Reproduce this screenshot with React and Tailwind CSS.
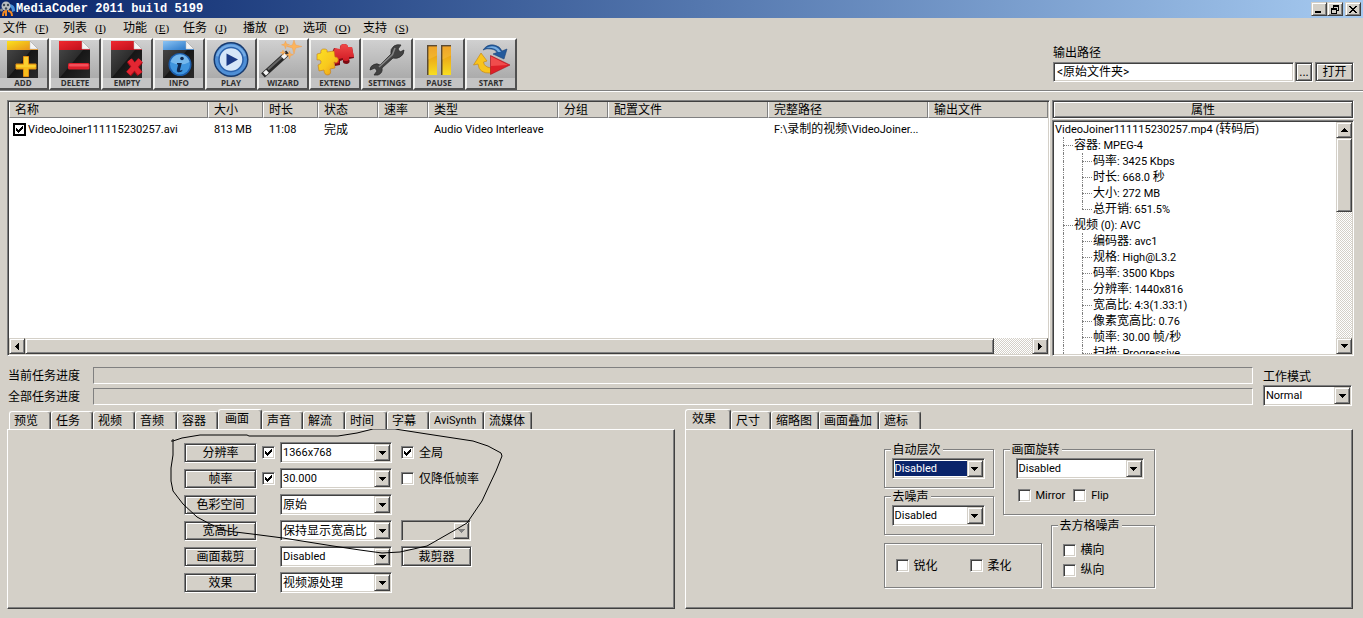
import React from "react";

const sunken =
  "border border-t-[#808080] border-l-[#808080] border-b-white border-r-white p-px shadow-[inset_1px_1px_0_#404040,inset_-1px_-1px_0_#d4d0c8]";
const raised =
  "border border-t-[#d4d0c8] border-l-[#d4d0c8] border-b-[#404040] border-r-[#404040] bg-[#d4d0c8] shadow-[inset_1px_1px_0_#fff,inset_-1px_-1px_0_#808080]";
const framed =
  "border border-t-[#808080] border-l-[#808080] border-b-white border-r-white bg-[#d4d0c8] shadow-[inset_0_0_0_1px_#404040,inset_2px_2px_0_#fff,inset_-2px_-2px_0_#808080]";
const dither =
  "bg-[repeating-conic-gradient(#fff_0_25%,#d4d0c8_0_50%)] bg-[length:2px_2px]";

/* Latin runs are one pixel smaller than the Chinese text beside them. */
function Mix({ text }) {
  return text.split(/([\x20-\x7e]+)/).map((part, i) =>
    /^[\x20-\x7e]+$/.test(part) ? (
      <span key={i} className="text-[11px] whitespace-pre">{part}</span>
    ) : (
      part
    )
  );
}

function Arrow({ dir = "down", color = "#000" }) {
  const d = {
    down: "M0 0h7v1h-1v1h-1v1h-1v1h-1v-1h-1v-1h-1v-1h-1z",
    up: "M3 0h1v1h1v1h1v1h1v1h-7v-1h1v-1h1v-1h1z",
    left: "M3 0h1v7h-1v-1h-1v-1h-1v-1h-1v-1h1v-1h1v-1h1z",
    right: "M0 0h1v1h1v1h1v1h1v1h-1v1h-1v1h-1v1h-1z",
  }[dir];
  const side = dir === "left" || dir === "right";
  return (
    <svg width={side ? 4 : 7} height={side ? 7 : 4} shapeRendering="crispEdges" aria-hidden="true">
      <path d={d} fill={color} />
    </svg>
  );
}

function Select({ label, value, className = "", focused, disabled }) {
  return (
    <div className={`${sunken} relative h-[21px] ${disabled ? "" : "bg-white"} ${className}`}>
      <select
        aria-label={label}
        disabled={disabled}
        defaultValue={value}
        className={`block h-full w-full appearance-none pr-4 leading-[16px] outline-none ${
          /[a-z0-9]/i.test(value) ? "text-[11px]" : "text-[12px]"
        } ${
          focused
            ? "border border-white bg-[#0a246a] text-white outline-1 -outline-offset-2 outline-dotted outline-[#f5db95]"
            : "pl-px text-black"
        }`}
      >
        <option>{value}</option>
      </select>
      <span className={`${raised} pointer-events-none absolute top-px right-px bottom-px flex w-4 items-center justify-center`}>
        <Arrow color={disabled ? "#808080" : "#000"} />
      </span>
    </div>
  );
}

function Check({ label, text, checked, flat }) {
  return (
    <label className={`flex h-4 items-center ${flat ? "gap-[2px]" : "gap-[5px]"}`}>
      <span className="relative block size-[13px] shrink-0">
        <input
          type="checkbox"
          aria-label={label}
          defaultChecked={checked}
          className={`peer block size-[13px] appearance-none bg-white ${
            flat ? "border-2 border-black" : sunken
          }`}
        />
        <svg className="pointer-events-none absolute top-[3px] left-[3px] hidden peer-checked:block" width="7" height="7" shapeRendering="crispEdges" aria-hidden="true">
          <path d="M0 2h1v1h1v1h1v-1h1v-1h1v-1h1v-1h1v3h-1v1h-1v1h-1v1h-1v1h-1v-1h-1v-1h-1z" />
        </svg>
      </span>
      {text && <span className="whitespace-nowrap"><Mix text={text} /></span>}
    </label>
  );
}

function Btn({ children, className = "" }) {
  return (
    <button type="button" className={`${framed} flex items-center justify-center whitespace-nowrap ${className}`}>
      {children}
    </button>
  );
}

function Group({ title, className = "", children }) {
  return (
    <fieldset className={`border border-[#808080] shadow-[1px_1px_0_#fff,inset_1px_1px_0_#fff] ${className}`}>
      {title && <legend className="float-left -mt-2 ml-[6px] bg-[#d4d0c8] px-[2px] leading-[16px]">{title}</legend>}
      {children}
    </fieldset>
  );
}

/* ---------- toolbar drawings ---------- */

function Sheet({ from, to, id, children }) {
  return (
    <>
      <defs>
        <linearGradient id={id} x1="0" y1="0" x2="1" y2="1">
          <stop offset="0" stopColor={from} />
          <stop offset="1" stopColor={to} />
        </linearGradient>
        <linearGradient id={id + "b"} x1="0" y1="0" x2="1" y2="1">
          <stop offset="0" stopColor="#4c4c4c" />
          <stop offset=".5" stopColor="#2c2c2c" />
          <stop offset=".52" stopColor="#161616" />
          <stop offset="1" stopColor="#2a2a2a" />
        </linearGradient>
      </defs>
      <path d="M8 1H31L39 9V38H8Z" fill={`url(#${id}b)`} />
      <path d="M8 1H31V10H8Z" fill={`url(#${id})`} />
      <path d="M31 9H39V10H31Z" fill={to} />
      <path d="M31 1L39 9H31Z" fill="#f4f4f4" stroke="#bbb" strokeWidth=".5" />
      {children}
    </>
  );
}

const pictures = {
  ADD: (
    <Sheet id="ga" from="#fbe21d" to="#e8931a">
      <path d="M24.500 16.500h5v7.500h7.500v5h-7.500v7.500h-5v-7.500h-7.500v-5h7.500z" fill="#f5bd1c" stroke="#e28c12" strokeLinejoin="round" />
      <path d="M25 17h4v8h8v2H17v-2h8z" fill="#fbdc3c" opacity=".6" />
    </Sheet>
  ),
  DELETE: (
    <Sheet id="gd" from="#f02a30" to="#c0101c">
      <rect x="17" y="23" width="21.500" height="6.500" rx="1.500" fill="#dc1f2b" />
      <rect x="18" y="24" width="19.500" height="2.500" rx="1" fill="#f0505a" />
    </Sheet>
  ),
  EMPTY: (
    <Sheet id="ge" from="#f02a30" to="#c0101c">
      <path d="M26.500 20.500L37 34M37.500 20.500L25.500 34" stroke="#a80c18" strokeWidth="6.500" />
      <path d="M26.500 20L37 33.500M37.500 20L25.500 33.500" stroke="#e32632" strokeWidth="5" />
    </Sheet>
  ),
  INFO: (
    <Sheet id="gi" from="#8cc4f4" to="#2a78c8">
      <circle cx="25" cy="24.500" r="11.500" fill="#1c5fae" />
      <circle cx="25" cy="24.500" r="10" fill="#3f95de" />
      <path d="M15.500 22a9.700 9.700 0 0 1 19 0q-9 5-19 0z" fill="#8cc6f2" opacity=".7" />
      <circle cx="27" cy="18.500" r="1.800" fill="#10294f" />
      <path d="M22 23h4.800l-2 7.500q1.300.4 2.700-.7l-.4 1.400q-2 1.500-4.200 1-1.600-.4-1-2.700l1.300-5H22z" fill="#10294f" />
    </Sheet>
  ),
  PLAY: (
    <>
      <circle cx="24" cy="19.500" r="17.500" fill="#173a6e" />
      <circle cx="24" cy="19.500" r="16" fill="#4f8fd6" />
      <path d="M9 16a15.500 15.500 0 0 1 30 0q-14 5-30 0z" fill="#8fc0ee" opacity=".6" />
      <circle cx="24" cy="19.500" r="12" fill="#d5e6f8" stroke="#2b62ac" strokeWidth="1.500" />
      <path d="M19.500 13.500L31 19.500L19.500 26Z" fill="#1a3a86" />
    </>
  ),
  WIZARD: (
    <>
      <path d="M6 33.500L27 14.500" stroke="#2a2a2a" strokeWidth="5.500" strokeLinecap="square" />
      <path d="M9 29.500L24 16" stroke="#666" strokeWidth="2" />
      <path d="M5.500 34L8.500 31.300M23.500 17.700L27 14.500" stroke="#f6f6f6" strokeWidth="4.200" />
      <path d="M35 0l1.600 5 6.400 1.500-6.400 1.500L35 14l-1.600-6L28 6.500 33.400 5zM26.500 1l1 2.800 3 1-3 1-1 3-1-3-3-1 3-1zM30.500 11l.9 2.700 3.100 1-3.100 1-.9 3.300-.9-3.300-3.100-1 3.100-1zM24 10l.7 2 2 .6-2 .6-.7 2-.7-2-2-.6 2-.6z" fill="#fbb45c" stroke="#f2994a" strokeWidth=".4" />
    </>
  ),
  EXTEND: (
    <>
      <defs>
        <linearGradient id="gy" x1="0" y1="0" x2="1" y2="1">
          <stop offset="0" stopColor="#fce223" />
          <stop offset=".55" stopColor="#f8c81e" />
          <stop offset="1" stopColor="#e8901a" />
        </linearGradient>
        <linearGradient id="gr" x1="0" y1="0" x2="0" y2="1">
          <stop offset="0" stopColor="#f04a48" />
          <stop offset="1" stopColor="#cc121e" />
        </linearGradient>
      </defs>
      <path d="M20 15l3-7 6 2q-1-6 4-6 4 0 4 4l4-1 2 11-5 1q2 4-2 5-5 0-4-4l-3 1 0 4-5 1-1-5q-3-1-3-6z" fill="#7c0a12" />
      <path d="M21 14l3-6 5 1q0-5 4-5 4 0 4 3l4 0 2 10-5 0q1 4-3 4-4 0-3-3l-4 1 0 4-4 1-1-5q-2-1-2-5z" fill="url(#gr)" />
      <path d="M6 14l4-1q-1-4 3-4 4 0 3 3l7-1 1 6q4 0 3 4-1 3-4 1l1 6-5 1q2 5-2 6-4 0-4-5l-5 1-1-6q4-1 3-4-2-2-4-1z" fill="url(#gy)" stroke="#c87a12" strokeWidth=".6" />
    </>
  ),
  SETTINGS: (
    <>
      <path
        d="M31 6Q34 4 38 5L35 9L37 12L41 10Q41 15 37 17Q34 19 30 18L19 28Q20 33 15 35L11 35L14 31L12 28L7 30Q7 26 11 24.500Q14 23 17 25L28 14Q27 9 31 6Z"
        fill="#424242"
        stroke="#2c2c2c"
        strokeWidth=".8"
        strokeLinejoin="round"
      />
      <path d="M16 27L29.500 14.500L32 8" fill="none" stroke="#858585" strokeWidth="1.500" />
    </>
  ),
  PAUSE: (
    <>
      <defs>
        <linearGradient id="gp" x1="0" y1="0" x2="0" y2="1">
          <stop offset="0" stopColor="#e58a14" />
          <stop offset="1" stopColor="#f8de20" />
        </linearGradient>
      </defs>
      <path d="M12 5h10v30H12zM26 5h10v30H26z" fill="#5a4a34" />
      <path d="M13.500 6.500h8.500v28.500h-8.500zM27.500 6.500h8.500v28.500h-8.500z" fill="url(#gp)" />
      <path d="M13.500 6.500h8.500v9l-8.500 4zM27.500 6.500h8.500v9l-8.500 4z" fill="#f8c040" opacity=".5" />
    </>
  ),
  START: (
    <>
      <path d="M16 10Q20 4 27 5Q33 6 35 11L40 9L37 19L26 14L30 12.500Q28 9 24 9Q20 8 16 10Z" fill="#235a9c" stroke="#1b4379" strokeWidth=".6" />
      <path d="M19 8Q24 5 29 7Q33 9 34 12L31 12Q28 7 19 8Z" fill="#78aee2" />
      <path d="M14 13L20 21L16.500 22Q17 27 24 28L24 33Q12 34 11 24L6.500 25Z" fill="#f9c41c" stroke="#c98a14" strokeWidth=".7" />
      <path d="M23.500 15.500L43 25L23.500 34.500Z" fill="#dd2028" stroke="#a8101a" strokeWidth=".6" />
      <path d="M24 16.500L41 25L24 26Z" fill="#f04c4c" />
    </>
  ),
};

function ToolButton({ name }) {
  return (
    <button type="button" className="flex w-[52px] shrink-0 flex-col border-2 border-t-white border-l-[#f4f4f2] border-r-[#505050] border-b-[#505050] bg-linear-to-b from-[#d0d0d0] to-[#a2a2a2]">
      <svg width="48" height="38" viewBox="0 0 48 38" aria-hidden="true">{pictures[name]}</svg>
      <span className="block h-[10px] w-full overflow-hidden bg-[#c4c4c4] text-center font-['Open_Sans'] text-[8px] leading-[10px] font-bold text-[#303030]">
        {name}
      </span>
    </button>
  );
}

/* ---------- window parts ---------- */

function TitleBar() {
  return (
    <header className="flex h-[18px] items-center bg-linear-to-r from-[#0a246a] to-[#a6caf0] pr-[2px]">
      <svg width="16" height="16" viewBox="0 0 16 16" aria-hidden="true">
        <path d="M8 3c5 0 7 2 7 7l-3 1c0-4-1-5-4-5z" fill="#4a90d8" />
        <circle cx="6" cy="5" r="4.500" fill="#b9bcc0" />
        <circle cx="4" cy="4" r="1.200" fill="#3b4452" />
        <circle cx="8" cy="4" r="1.200" fill="#3b4452" />
        <circle cx="6" cy="7.500" r="1.200" fill="#3b4452" />
        <circle cx="1.500" cy="9" r="1.500" fill="#8b8f96" />
        <path d="M3 15c0-3 1-5 3-5v5M8 10c3 0 4 2 4 5" fill="none" stroke="#f08a24" strokeWidth="2" />
      </svg>
      <h1 className="flex-1 font-['Liberation_Mono',monospace] text-[12px] leading-[18px] font-bold text-white">
        MediaCoder 2011 build 5199
      </h1>
      <button type="button" aria-label="Minimize" className={`${raised} flex h-[14px] w-4 items-center justify-center`}>
        <svg width="8" height="8" shapeRendering="crispEdges"><path d="M0 6h6v2H0z" /></svg>
      </button>
      <button type="button" aria-label="Restore" className={`${raised} flex h-[14px] w-4 items-center justify-center`}>
        <svg width="8" height="9" shapeRendering="crispEdges">
          <path d="M2 0h6v6H6V5h1V2H3v1H2zM0 3h6v6H0zM1 5v3h4V5z" fillRule="evenodd" />
        </svg>
      </button>
      <button type="button" aria-label="Close" className={`${raised} ml-[2px] flex h-[14px] w-4 items-center justify-center`}>
        <svg width="8" height="7" shapeRendering="crispEdges">
          <path d="M0 0h2v1h1v1h2v-1h1v-1h2v1h-1v1h-1v1h-1v1h1v1h1v1h1v1h-2v-1h-1v-1h-2v1h-1v1h-2v-1h1v-1h1v-1h1v-1h-1v-1h-1v-1h-1z" />
        </svg>
      </button>
    </header>
  );
}

const menus = [
  ["文件", "F"], ["列表", "I"], ["功能", "E"], ["任务", "J"], ["播放", "P"], ["选项", "O"], ["支持", "S"],
];

function MenuBar() {
  return (
    <nav className="flex h-5 items-center pl-[3px]">
      {menus.map(([name, key]) => (
        <button type="button" key={name} className="flex w-[60px] items-center gap-2">
          {name}
          <span className="font-['Liberation_Serif',serif] text-[11px]">(<u>{key}</u>)</span>
        </button>
      ))}
    </nav>
  );
}

const columns = [
  ["名称", "w-[199px]"], ["大小", "w-[55px]"], ["时长", "w-[55px]"], ["状态", "w-[60px]"], ["速率", "w-[50px]"],
  ["类型", "w-[130px]"], ["分组", "w-[50px]"], ["配置文件", "w-[160px]"], ["完整路径", "w-[160px]"], ["输出文件", ""],
];
const cells = ["813 MB", "11:08", "完成", "", "Audio Video Interleave", "", "", "F:\\录制的视频\\VideoJoiner...", ""];

function FileList() {
  return (
    <section className={`${sunken} flex min-w-0 flex-1 flex-col bg-white`}>
      <div className="min-h-0 flex-1 overflow-hidden">
        <table className="w-full table-fixed border-collapse text-left">
          <thead>
            <tr className="h-4 bg-[#d4d0c8]">
              {columns.map(([name, width]) => (
                <th key={name} className={`${width} p-0 font-normal`}>
                  <div className="h-4 border-r border-b border-l border-r-[#808080] border-b-[#808080] border-l-white pl-[5px] leading-[16px]">
                    {name}
                  </div>
                </th>
              ))}
            </tr>
          </thead>
          <tbody>
            <tr className="h-[22px]">
              <td className="p-0 pt-px pl-1">
                <Check flat checked text="VideoJoiner111115230257.avi" />
              </td>
              {cells.map((cell, i) => (
                <td key={i} className="truncate p-0 pt-px pl-[6px] leading-[16px]"><Mix text={cell} /></td>
              ))}
            </tr>
          </tbody>
        </table>
      </div>
      <div className={`${dither} flex h-4`}>
        <button type="button" aria-label="Scroll left" className={`${raised} flex w-4 items-center justify-center`}><Arrow dir="left" /></button>
        <div className={`${raised} min-w-0 flex-1`} />
        <div className="w-[38px]" />
        <button type="button" aria-label="Scroll right" className={`${raised} flex w-4 items-center justify-center`}><Arrow dir="right" /></button>
      </div>
    </section>
  );
}

const tree = [
  [0, "VideoJoiner111115230257.mp4 (转码后)"],
  [1, "容器: MPEG-4"],
  [2, "码率: 3425 Kbps"],
  [2, "时长: 668.0 秒"],
  [2, "大小: 272 MB"],
  [2, "总开销: 651.5%", true],
  [1, "视频 (0): AVC"],
  [2, "编码器: avc1"],
  [2, "规格: High@L3.2"],
  [2, "码率: 3500 Kbps"],
  [2, "分辨率: 1440x816"],
  [2, "宽高比: 4:3(1.33:1)"],
  [2, "像素宽高比: 0.76"],
  [2, "帧率: 30.00 帧/秒"],
  [2, "扫描: Progressive"],
];

function Branch({ tick, last }) {
  return (
    <span className="flex h-4 w-[19px] shrink-0 flex-col">
      <span className={`h-2 border-l border-dotted border-[#808080] ${tick ? "mr-[9px]" : ""}`} />
      <span
        className={`h-2 border-dotted border-[#808080] ${tick ? "mr-[9px] border-t" : ""} ${last ? "" : "border-l"}`}
      />
    </span>
  );
}

function Properties() {
  return (
    <aside className="flex w-[302px] shrink-0 flex-col">
      <Btn className="h-[19px] w-full shrink-0">属性</Btn>
      <div className={`${sunken} mt-px flex min-h-0 flex-1 bg-white`}>
        <ul className="-mt-px min-w-0 flex-1 overflow-hidden pl-px">
          {tree.map(([level, text, last], i) => (
            <li key={i} className="flex h-4 leading-[16px] whitespace-nowrap">
              {level > 0 && <span className="w-2 shrink-0" />}
              {level > 0 && <Branch tick={level === 1} />}
              {level > 1 && <Branch tick last={last} />}
              <span className={level > 0 ? "-ml-2" : ""}><Mix text={text} /></span>
            </li>
          ))}
        </ul>
        <div className={`${dither} flex w-4 flex-col`}>
          <button type="button" aria-label="Scroll up" className={`${raised} flex h-4 items-center justify-center`}><Arrow dir="up" /></button>
          <div className={`${raised} h-[74px]`} />
          <div className="flex-1" />
          <button type="button" aria-label="Scroll down" className={`${raised} flex h-4 items-center justify-center`}><Arrow /></button>
        </div>
      </div>
    </aside>
  );
}

function Tabs({ items, active, children, label }) {
  return (
    <section className="flex min-w-0 flex-1 flex-col">
      <div role="tablist" aria-label={label} className="flex h-5 items-end">
        {items.map(([name, width]) => {
          const on = name === active;
          return (
            <button
              type="button"
              role="tab"
              aria-selected={on}
              key={name}
              className={`${width} shrink-0 rounded-t-[3px] border-t border-r border-l border-t-white border-r-[#404040] border-l-white bg-[#d4d0c8] text-left whitespace-nowrap shadow-[inset_-1px_0_0_#808080] ${
                on ? "relative -mb-px h-[21px] pb-[3px] pl-[6px]" : "h-[18px] pl-1"
              }`}
            >
              <Mix text={name} />
            </button>
          );
        })}
      </div>
      <div role="tabpanel" className="relative h-[180px] border border-t-white border-r-[#404040] border-b-[#404040] border-l-white shadow-[inset_-1px_-1px_0_#808080]">
        {children}
      </div>
    </section>
  );
}

const leftTabs = [
  ["预览", "ml-[2px] w-[42px]"], ["任务", "w-[42px]"], ["视频", "w-[42px]"], ["音频", "w-[42px]"], ["容器", "w-[41px]"],
  ["画面", "w-[44px]"], ["声音", "w-[41px]"], ["解流", "w-[42px]"], ["时间", "w-[42px]"], ["字幕", "w-[42px]"],
  ["AviSynth", "w-[55px]"], ["流媒体", "w-[48px]"],
];
const rightTabs = [
  ["效果", "w-[46px]"], ["尺寸", "w-[40px]"], ["缩略图", "w-[48px]"], ["画面叠加", "w-[60px]"], ["遮标", "w-[42px]"],
];

const pictureRows = [
  { name: "分辨率", value: "1366x768", on: true, extra: <Check checked text="全局" /> },
  { name: "帧率", value: "30.000", on: true, extra: <Check text="仅降低帧率" /> },
  { name: "色彩空间", value: "原始" },
  { name: "宽高比", value: "保持显示宽高比", extra: <Select label="宽高比数值" value="" disabled className="w-[70px]" /> },
  { name: "画面裁剪", value: "Disabled", extra: <Btn className="h-[21px] w-[71px]">裁剪器</Btn> },
  { name: "效果", value: "视频源处理" },
];

function PicturePanel() {
  return (
    <>
      <div className="flex flex-col gap-[5px] pt-3 pl-44">
        {pictureRows.map((row) => (
          <div key={row.name} className="flex h-[21px] items-center">
            <Btn className="h-5 w-[73px]">{row.name}</Btn>
            <div className="w-[23px] pl-[5px]">{row.on && <Check checked label={`启用${row.name}`} />}</div>
            <Select label={row.name} value={row.value} className="w-28" />
            <div className="pl-[9px]">{row.extra}</div>
          </div>
        ))}
      </div>
      <svg className="pointer-events-none absolute -top-px left-[162px]" width="334" height="128" aria-hidden="true">
        <path
          d="M1 12L3 12L12 9L30 6L77 6L79 7L168 7L187 4L203 0L225 0L257 5L303 12L318 17L331 24L332 27L326 42L318 59L312 72L297 94L285 101L257 117L230 123L212 124L190 121L163 117L113 109L82 105L57 102L40 95L27 88L13 75L3 62L1 52L1 39L3 26L3 10"
          fill="none"
          stroke="#000"
        />
      </svg>
    </>
  );
}

function EffectPanel() {
  return (
    <div className="grid grid-cols-[110px_9px_39px_9px_104px] grid-rows-[39px_39px_45px] justify-center gap-y-2 pt-[19px]">
      <Group title="自动层次" className="col-start-1 row-start-1">
        <Select label="自动层次" value="Disabled" focused className="clear-both mr-2 ml-[7px] mt-px" />
      </Group>
      <Group title="去噪声" className="col-start-1 row-start-2">
        <Select label="去噪声" value="Disabled" className="clear-both mr-2 ml-[7px] mt-px" />
      </Group>
      <Group className="col-span-3 col-start-1 row-start-3 flex items-center gap-8 pl-[11px]">
        <Check text="锐化" />
        <Check text="柔化" />
      </Group>
      <Group title="画面旋转" className="col-span-3 col-start-3 row-span-2 row-start-1 h-[66px]">
        <Select label="画面旋转" value="Disabled" className="clear-both mr-[10px] ml-3 mt-px" />
        <div className="flex gap-2 pt-2 pl-[14px]">
          <Check text="Mirror" />
          <Check text="Flip" />
        </div>
      </Group>
      <Group title="去方格噪声" className="col-start-5 row-span-2 row-start-2 h-[63px] self-end">
        <div className="clear-both flex flex-col gap-1 pt-2 pl-[11px]">
          <Check text="横向" />
          <Check text="纵向" />
        </div>
      </Group>
    </div>
  );
}

export default function App() {
  return (
    <div className="min-h-screen w-full overflow-hidden bg-[#d4d0c8] font-['Roboto','Noto_Sans_CJK_SC',sans-serif] text-[12px] leading-[16px] text-black">
      <TitleBar />
      <MenuBar />
      <div className="flex justify-between border-b border-[#808080] pr-[9px] shadow-[0_1px_0_#fff]">
        <div className="-ml-[3px] flex h-[52px]">
          {Object.keys(pictures).map((name) => <ToolButton key={name} name={name} />)}
        </div>
        <div className="w-[301px] pt-[7px]">
          <label htmlFor="out" className="block leading-[16px]">输出路径</label>
          <div className="mt-px flex">
            <div className={`${sunken} min-w-0 flex-1 bg-white`}>
              <input id="out" defaultValue="<原始文件夹>" className="block h-4 w-full pl-[2px] leading-[16px] outline-none" />
            </div>
            <Btn className="ml-px w-[18px]">...</Btn>
            <Btn className="ml-[2px] w-[39px]">打开</Btn>
          </div>
        </div>
      </div>
      <main>
        <div className="mt-[9px] flex h-[256px] gap-[2px] pr-[9px] pl-[7px]">
          <FileList />
          <Properties />
        </div>
        <div className="mt-[11px] flex gap-[10px] pr-[11px] pl-2">
          <div className="flex flex-1 flex-col gap-1">
            {["当前任务进度", "全部任务进度"].map((name) => (
              <div key={name} className="flex h-[17px] items-center">
                <span className="w-[85px] shrink-0">{name}</span>
                <div role="progressbar" aria-label={name} aria-valuenow={0} className="h-full flex-1 border border-t-[#808080] border-r-white border-b-white border-l-[#808080]" />
              </div>
            ))}
          </div>
          <div className="w-[89px] pt-[2px]">
            <div className="leading-[16px]">工作模式</div>
            <Select label="工作模式" value="Normal" />
          </div>
        </div>
        <div className="mt-[3px] flex gap-[10px] pr-[10px] pb-2 pl-[7px]">
          <Tabs label="任务设置" items={leftTabs} active="画面"><PicturePanel /></Tabs>
          <Tabs label="画面效果" items={rightTabs} active="效果"><EffectPanel /></Tabs>
        </div>
      </main>
    </div>
  );
}
